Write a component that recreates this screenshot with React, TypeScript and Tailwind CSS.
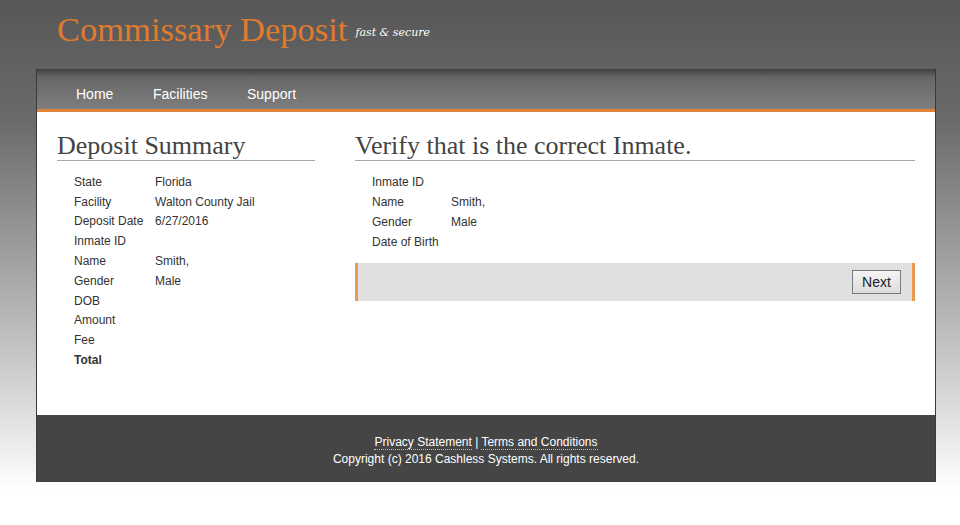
import React from "react";

const summary: [string, string][] = [
  ["State", "Florida"],
  ["Facility", "Walton County Jail"],
  ["Deposit Date", "6/27/2016"],
  ["Inmate ID", ""],
  ["Name", "Smith,"],
  ["Gender", "Male"],
  ["DOB", ""],
  ["Amount", ""],
  ["Fee", ""],
];

const inmate: [string, string][] = [
  ["Inmate ID", ""],
  ["Name", "Smith,"],
  ["Gender", "Male"],
  ["Date of Birth", ""],
];

export default function App() {
  return (
    <div className="min-h-[525px] w-[960px] bg-[linear-gradient(to_bottom,#575757_0px,#6a6a6a_120px,#c8c8c8_360px,#ffffff_490px)] font-['Liberation_Sans',Arial,sans-serif]">
      {/* header */}
      <div className="flex h-[69px] items-start pl-[57px] pt-[9px]">
        <span className="font-['Liberation_Serif',Georgia,serif] text-[34.5px] leading-[40px] text-[#e07a2c]">
          Commissary Deposit
        </span>
        <span className="ml-[8px] mt-[16px] font-['DejaVu_Serif',Georgia,serif] text-[11px] italic text-white">
          fast &amp; secure
        </span>
      </div>

      <div className="mx-[36px] w-[900px] border-x border-[#3a3a3a] bg-white">
        {/* nav */}
        <nav className="flex h-[40px] items-center bg-[linear-gradient(to_bottom,#3f3f3f_0px,#666_8px,#7e7e7e_40px)] pl-[39px] pt-[10px] text-[14px] text-white">
          <a className="w-[77px]">Home</a>
          <a className="w-[94px]">Facilities</a>
          <a>Support</a>
        </nav>
        <div className="h-[3px] bg-[#e0863a]" />

        {/* content */}
        <div className="flex h-[303px] px-[20px] pt-[20px] text-[12px] text-[#333]">
          <div className="w-[258px]">
            <h2 className="border-b border-[#a8a8a8] font-['Liberation_Serif',Georgia,serif] text-[26px] leading-[28px] text-[#444]">
              Deposit Summary
            </h2>
            <div className="pl-[17px] pt-[11px]">
              {summary.map(([k, v]) => (
                <div key={k} className="flex h-[19.8px] items-center">
                  <span className="w-[81px]">{k}</span>
                  <span>{v}</span>
                </div>
              ))}
              <div className="flex h-[19.8px] items-center font-bold">Total</div>
            </div>
          </div>

          <div className="ml-[40px] w-[560px]">
            <h2 className="border-b border-[#a8a8a8] font-['Liberation_Serif',Georgia,serif] text-[26px] leading-[28px] text-[#444]">
              Verify that is the correct Inmate.
            </h2>
            <div className="pl-[17px] pt-[11px]">
              {inmate.map(([k, v]) => (
                <div key={k} className="flex h-[20px] items-center">
                  <span className="w-[79px]">{k}</span>
                  <span>{v}</span>
                </div>
              ))}
            </div>
            <div className="mt-[11px] flex h-[38px] items-center justify-end border-x-[3px] border-[#e99a4c] bg-[#e0e0e0] pr-[11px]">
              <button className="h-[24px] w-[49px] border border-[#7a7a7a] bg-[linear-gradient(to_bottom,#f4f4f4,#dcdcdc)] text-[14px] text-[#222]">
                Next
              </button>
            </div>
          </div>
        </div>

        {/* footer */}
        <footer className="flex h-[67px] flex-col items-center justify-center bg-[#454545] pt-[4px] text-[12px] leading-[17px] text-white">
          <div>
            <a className="border-b border-dotted border-[#bbb]">Privacy Statement</a>
            {" | "}
            <a className="border-b border-dotted border-[#bbb]">Terms and Conditions</a>
          </div>
          <div>Copyright (c) 2016 Cashless Systems. All rights reserved.</div>
        </footer>
      </div>
    </div>
  );
}
